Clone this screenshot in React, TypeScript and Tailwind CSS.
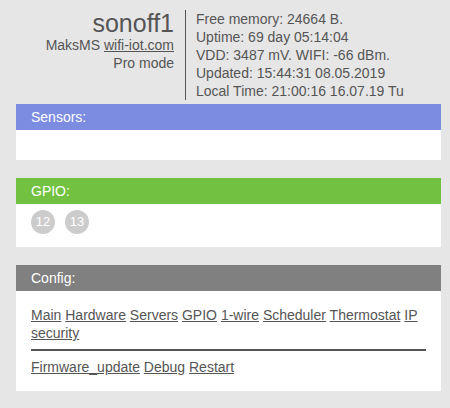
import React from "react";

function Section({ title, color, children }: { title: string; color: string; children?: React.ReactNode }) {
  return (
    <div className="ml-4 mr-[9px] bg-white">
      <div className={`${color} h-[26px] px-[15px] text-[14px] leading-[26px] text-white`}>{title}</div>
      {children}
    </div>
  );
}

function App() {
  const links = ["Main", "Hardware", "Servers", "GPIO", "1-wire", "Scheduler", "Thermostat", "IP security"];
  const tools = ["Firmware_update", "Debug", "Restart"];
  const info = [
    "Free memory: 24664 B.",
    "Uptime: 69 day 05:14:04",
    "VDD: 3487 mV. WIFI: -66 dBm.",
    "Updated: 15:44:31 08.05.2019",
    "Local Time: 21:00:16 16.07.19 Tu",
  ];

  return (
    <div className="min-h-[408px] w-[450px] bg-[#e6e6e6] pt-[10px] font-['Liberation_Sans',Arial,sans-serif] text-[#555]">
      <div className="mx-4 flex">
        <div className="w-[170px] border-r border-[#555] pr-[11px] text-right">
          <div className="text-[25px] leading-[26px]">sonoff1</div>
          <div className="text-[14px] leading-[18px]">
            MaksMS <a href="#" className="underline">wifi-iot.com</a>
          </div>
          <div className="text-[14px] leading-[18px]">Pro mode</div>
        </div>
        <div className="pl-[10px] text-[14px] leading-[18px]">
          {info.map((line) => (
            <div key={line}>{line}</div>
          ))}
        </div>
      </div>

      <div className="mt-1 flex flex-col gap-[18px] pb-[17px]">
        <Section title="Sensors:" color="bg-[#7b8ce1]">
          <div className="h-[30px]" />
        </Section>

        <Section title="GPIO:" color="bg-[#72c140]">
          <div className="flex h-[43px] gap-[10px] px-[15px] pt-[6px]">
            {["12", "13"].map((n) => (
              <span
                key={n}
                className="flex h-6 w-6 items-center justify-center rounded-full bg-[#cccccc] text-[13px] text-white"
              >
                {n}
              </span>
            ))}
          </div>
        </Section>

        <Section title="Config:" color="bg-[#808080]">
          <div className="px-[15px] pb-[15px] pt-[15px] text-[14px] leading-[18px]">
            <div>
              {links.map((l, i) => (
                <React.Fragment key={l}>
                  <a href="#" className="underline">{l}</a>
                  {i < links.length - 1 ? " " : ""}
                </React.Fragment>
              ))}
            </div>
            <div className="my-[7px] h-[2px] bg-[#555]" />
            <div>
              {tools.map((l, i) => (
                <React.Fragment key={l}>
                  <a href="#" className="underline">{l}</a>
                  {i < tools.length - 1 ? " " : ""}
                </React.Fragment>
              ))}
            </div>
          </div>
        </Section>
      </div>
    </div>
  );
}

export default App;
